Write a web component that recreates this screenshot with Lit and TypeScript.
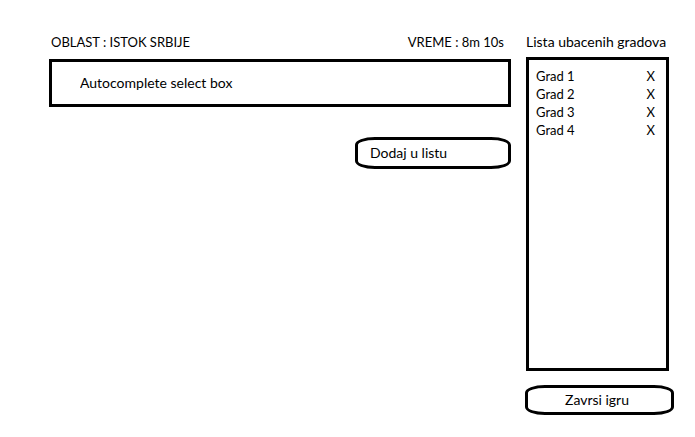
import { LitElement, html, css } from "lit";
import { customElement, state } from "lit/decorators.js";

@customElement("app-root")
export class AppRoot extends LitElement {
  static styles = css`
    :host {
      display: block;
      min-height: 100vh;
      box-sizing: border-box;
      background: #fff;
      color: #000;
      font: 14px/18px Lato, "Open Sans", sans-serif;
    }
    * {
      box-sizing: border-box;
    }
    .page {
      display: grid;
      grid-template-columns: minmax(0, 1fr) 149px;
      gap: 14px;
      padding: 33px 21px 20px 49px;
    }
    .game {
      display: flex;
      flex-direction: column;
    }
    .status {
      display: flex;
      justify-content: space-between;
      padding: 0 7px 0 2px;
      margin-bottom: 8px;
      font-size: 13px;
    }
    .search {
      width: 100%;
      height: 48px;
      padding: 0 28px 2px;
      border: 3px solid #000;
      border-radius: 0;
      background: #fff;
      color: inherit;
      font: inherit;
    }
    .search::placeholder {
      color: inherit;
      opacity: 1;
    }
    .button {
      border: 3px solid #000;
      border-radius: 20px / 8px;
      background: #fff;
      color: inherit;
      font: inherit;
      text-align: left;
    }
    .add {
      width: 156px;
      height: 32px;
      margin-top: 30px;
      padding: 0 12px;
      align-self: flex-end;
    }
    .cities {
      display: flex;
      flex-direction: column;
    }
    .title {
      margin: 0 0 6px 1px;
      font: inherit;
      white-space: nowrap;
    }
    .list {
      min-height: 314px;
      margin: 0 5px 0 1px;
      padding: 7px 11px 7px 7px;
      border: 3px solid #000;
      font-size: 13px;
      list-style: none;
    }
    .row {
      display: flex;
      justify-content: space-between;
    }
    .remove {
      padding: 0;
      border: 0;
      background: none;
      color: inherit;
      font: inherit;
    }
    .finish {
      height: 30px;
      margin-top: 14px;
      padding: 0 37px;
    }
  `;

  @state() private cities = ["Grad 1", "Grad 2", "Grad 3", "Grad 4"];
  @state() private entry = "";

  private add() {
    const name = this.entry.trim();
    if (!name) return;
    this.cities = [...this.cities, name];
    this.entry = "";
  }

  private remove(index: number) {
    this.cities = this.cities.filter((_, i) => i !== index);
  }

  render() {
    return html`
      <main class="page">
        <section class="game">
          <div class="status">
            <span>OBLAST : ISTOK SRBIJE</span>
            <span>VREME : 8m 10s</span>
          </div>
          <input
            class="search"
            type="text"
            aria-label="Autocomplete select box"
            placeholder="Autocomplete select box"
            .value=${this.entry}
            @input=${(e: Event) => (this.entry = (e.target as HTMLInputElement).value)}
          />
          <button class="button add" type="button" @click=${this.add}>Dodaj u listu</button>
        </section>
        <section class="cities">
          <h2 class="title">Lista ubacenih gradova</h2>
          <ul class="list">
            ${this.cities.map(
              (city, i) => html`
                <li class="row">
                  <span>${city}</span>
                  <button class="remove" type="button" aria-label="X ${city}" @click=${() => this.remove(i)}>X</button>
                </li>
              `
            )}
          </ul>
          <button class="button finish" type="button">Zavrsi igru</button>
        </section>
      </main>
    `;
  }
}
